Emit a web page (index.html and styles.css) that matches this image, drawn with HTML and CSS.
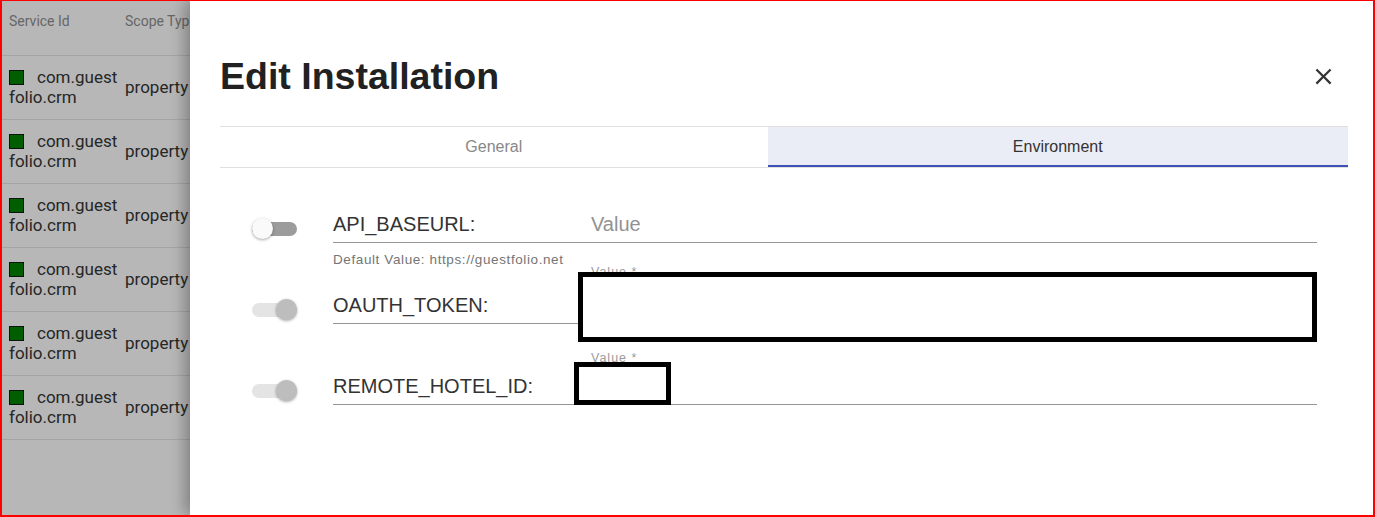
FILE: index.html
```html
<!DOCTYPE html>
<html>
<head>
<meta charset="utf-8">
<link rel="stylesheet" href="styles.css">
</head>
<body>
<div class="frame">
  <div class="backdrop">
    <div class="svc-table">
      <div class="svc-head">
        <div class="c-id">Service Id</div>
        <div class="c-scope">Scope Type</div>
      </div>
      <div class="svc-row"><div class="c-id"><span class="status"></span>com.guestfolio.crm</div><div class="c-scope">property</div></div>
      <div class="svc-row"><div class="c-id"><span class="status"></span>com.guestfolio.crm</div><div class="c-scope">property</div></div>
      <div class="svc-row"><div class="c-id"><span class="status"></span>com.guestfolio.crm</div><div class="c-scope">property</div></div>
      <div class="svc-row"><div class="c-id"><span class="status"></span>com.guestfolio.crm</div><div class="c-scope">property</div></div>
      <div class="svc-row"><div class="c-id"><span class="status"></span>com.guestfolio.crm</div><div class="c-scope">property</div></div>
      <div class="svc-row"><div class="c-id"><span class="status"></span>com.guestfolio.crm</div><div class="c-scope">property</div></div>
    </div>
  </div>
  <aside class="drawer">
    <header class="drawer-head">
      <h1 class="drawer-title">Edit Installation</h1>
      <button class="close" type="button" aria-label="Close">
        <svg viewBox="0 0 24 24" width="27" height="27"><path d="M19 6.41L17.59 5 12 10.59 6.41 5 5 6.41 10.59 12 5 17.59 6.41 19 12 13.41 17.59 19 19 17.59 13.41 12z" fill="#333"/></svg>
      </button>
    </header>
    <nav class="tabs">
      <div class="tab">General</div>
      <div class="tab active">Environment</div>
    </nav>
    <div class="env-form">
      <div class="env-row">
        <div class="switch-cell"><span class="switch off"><span class="track"></span><span class="thumb"></span></span></div>
        <div class="field">
          <div class="float-label"></div>
          <div class="line"><span class="name">API_BASEURL:</span><span class="value placeholder">Value</span></div>
          <div class="helper">Default Value: https://guestfolio.net</div>
        </div>
      </div>
      <div class="env-row">
        <div class="switch-cell"><span class="switch on"><span class="track"></span><span class="thumb"></span></span></div>
        <div class="field">
          <div class="float-label raised">Value *</div>
          <div class="line"><span class="name">OAUTH_TOKEN:</span><span class="value"></span></div>
          <div class="helper"></div>
          <div class="redact redact-token"></div>
        </div>
      </div>
      <div class="env-row">
        <div class="switch-cell"><span class="switch on"><span class="track"></span><span class="thumb"></span></span></div>
        <div class="field">
          <div class="float-label">Value *</div>
          <div class="line"><span class="name">REMOTE_HOTEL_ID:</span><span class="value"></span></div>
          <div class="helper"></div>
          <div class="redact redact-hotel"></div>
        </div>
      </div>
    </div>
  </aside>
</div>
</body>
</html>
```

FILE: styles.css
```css
html, body {
  margin: 0;
  padding: 0;
}
body {
  font-family: Roboto, "Liberation Sans", Arial, sans-serif;
  background: #fff;
}
.frame {
  box-sizing: border-box;
  width: 1375px;
  height: 517px;
  border-style: solid;
  border-color: #ff0000;
  border-width: 1px 2px 2px 2px;
  display: flex;
  overflow: hidden;
}
.backdrop {
  width: 188px;
  flex: none;
  background: #b7b7b7;
  overflow: hidden;
}
.svc-table {
  width: 400px;
}
.svc-head, .svc-row {
  display: flex;
  border-bottom: 1px solid #a5a5a5;
}
.svc-head {
  height: 54px;
  align-items: flex-start;
  font-size: 14px;
  line-height: 20px;
  color: #666;
}
.svc-head > div {
  padding-top: 10px;
}
.svc-row {
  height: 63px;
  align-items: center;
  font-size: 17px;
  line-height: 20px;
  color: #262626;
}
.svc-row > div {
  margin-top: -2px;
}
.c-id {
  box-sizing: border-box;
  width: 123px;
  padding: 0 4px 0 7px;
  flex: none;
  word-break: break-all;
}
.c-scope {
  white-space: nowrap;
}
.status {
  display: inline-block;
  width: 13px;
  height: 13px;
  background: #005e00;
  border: 1px solid #111;
  margin-right: 13px;
  vertical-align: -2px;
}
.drawer {
  flex: 1;
  background: #fff;
  padding: 53px 25px 0 30px;
  box-shadow: -5px 0 14px rgba(0, 0, 0, 0.3);
  position: relative;
  font-family: "Liberation Sans", Arial, sans-serif;
}
.drawer-head {
  display: flex;
  align-items: center;
  justify-content: space-between;
  height: 44px;
}
.drawer-title {
  margin: 0;
  font-size: 37.5px;
  line-height: 44px;
  font-weight: 700;
  color: #212121;
}
.close {
  border: 0;
  background: none;
  padding: 0;
  margin-right: 11px;
  width: 27px;
  height: 27px;
  display: flex;
}
.tabs {
  margin-top: 28px;
  display: flex;
  border-top: 1px solid #e0e0e0;
  border-bottom: 1px solid #e0e0e0;
}
.tab {
  flex: 1 1 auto;
  height: 40px;
  line-height: 40px;
  text-align: center;
  font-size: 16px;
  color: #888;
}
.tab.active {
  background: #eaecf6;
  color: #333;
  box-shadow: inset 0 -2px 0 #3f51b5;
}
.env-form {
  padding: 21px 31px 0 32px;
}
.env-row {
  display: flex;
  padding-bottom: 1px;
}
.switch-cell {
  width: 81px;
  flex: none;
  padding-top: 29px;
}
.switch {
  display: block;
  position: relative;
  width: 45px;
  height: 21px;
}
.track {
  position: absolute;
  left: 0;
  right: 0;
  top: 4px;
  height: 14px;
  border-radius: 7px;
}
.thumb {
  position: absolute;
  top: 0;
  width: 21px;
  height: 21px;
  border-radius: 50%;
  box-shadow: 0 1px 3px rgba(0, 0, 0, 0.35);
}
.switch.off .track { background: #9c9c9c; }
.switch.off .thumb { left: 0; background: #fafafa; }
.switch.on .track { background: #e4e4e4; }
.switch.on .thumb { right: 0; background: #bdbdbd; }
.field {
  flex: 1;
  position: relative;
}
.float-label {
  height: 14px;
  font-size: 12.5px;
  line-height: 14px;
  letter-spacing: 1px;
  color: #9a9a9a;
  padding-left: 258px;
}
.float-label.raised {
  transform: translateY(-5px);
}
.line {
  display: flex;
  align-items: center;
  box-sizing: border-box;
  height: 40px;
  padding-top: 4px;
  border-bottom: 1px solid #959595;
}
.name {
  width: 258px;
  flex: none;
  font-size: 20px;
  color: #333;
}
.value {
  flex: 1;
  font-size: 20px;
}
.placeholder {
  color: #929292;
}
.helper {
  margin-top: 8px;
  height: 18px;
  font-size: 13.5px;
  line-height: 18px;
  letter-spacing: 0.6px;
  color: #757575;
}
.redact {
  position: absolute;
  box-sizing: border-box;
  border: 5px solid #000;
  background: #fff;
}
.redact-token {
  left: 245px;
  top: 2px;
  width: 739px;
  height: 70px;
}
.redact-hotel {
  left: 241px;
  top: 11px;
  width: 97px;
  height: 43px;
}
```
